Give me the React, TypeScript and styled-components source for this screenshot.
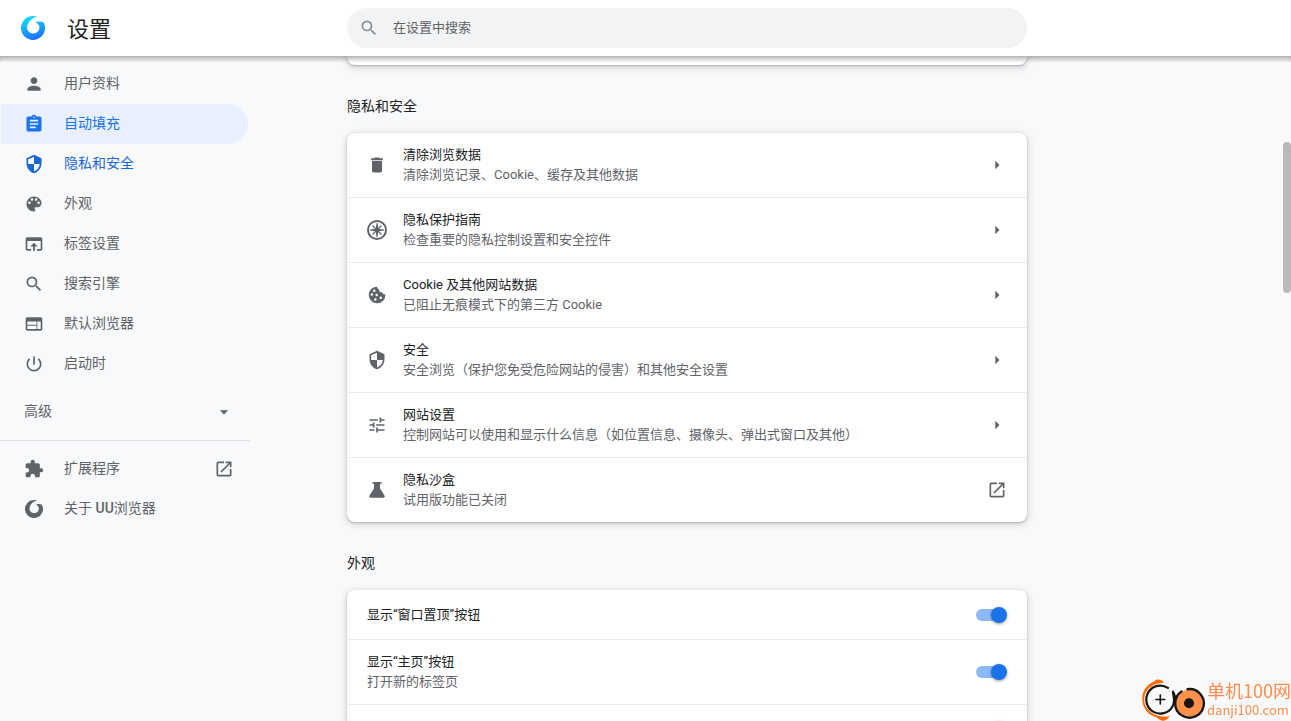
import React from 'react';
import styled, { createGlobalStyle } from 'styled-components';
import {
  MdArrowDropDown, MdArrowRight, MdAssignment, MdDelete, MdExtension,
  MdOpenInNew, MdPerson, MdPowerSettingsNew, MdSearch, MdSecurity, MdTune, MdWeb,
} from 'react-icons/md';

const GlobalStyle = createGlobalStyle`
  *, *::before, *::after { box-sizing: border-box; }
  body {
    margin: 0;
    background: #f8f9fb;
    color: #202124;
    font: 400 13px/20px Roboto, "Noto Sans CJK SC", sans-serif;
  }
  button, input { font: inherit; color: inherit; }
  h1, h2, p { margin: 0; font-weight: 400; }
  a { color: inherit; text-decoration: none; }
  svg { display: block; flex: none; }
`;

const Page = styled.div`
  display: flex;
  flex-direction: column;
  height: 100vh;
  overflow: hidden;
`;

const Header = styled.header`
  position: relative;
  z-index: 1;
  display: flex;
  flex: none;
  height: 56px;
  background: #fff;

  &::after {
    content: '';
    position: absolute;
    top: 100%;
    left: 0;
    right: 0;
    height: 6px;
    box-shadow: inset 0 5px 6px -3px rgba(0, 0, 0, 0.4);
  }
`;

const Body = styled.div`
  display: flex;
  flex: 1;
  min-height: 0;
`;

const StartColumn = styled.div`
  flex: 1 0 266px;
`;

const CenterColumn = styled.div`
  flex: 0 1 680px;
  min-width: 0;
`;

const EndColumn = styled.div`
  flex: 1 1 183px;
`;

const Brand = styled(StartColumn)`
  display: flex;
  align-items: center;
  gap: 22px;
  padding-left: 21px;
`;

const Title = styled.h1`
  padding-top: 4px;
  font-size: 22px;
  line-height: 32px;
`;

const SearchBox = styled.label`
  display: flex;
  align-items: center;
  gap: 14px;
  height: 40px;
  margin-top: 8px;
  padding: 0 12px;
  border-radius: 20px;
  background: #f1f3f4;
  color: #8b8e92;
`;

const SearchInput = styled.input`
  flex: 1;
  min-width: 0;
  padding: 0;
  border: 0;
  outline: 0;
  background: none;
  color: #202124;

  &::placeholder { color: #5f6368; opacity: 1; }
`;

const Menu = styled.nav`
  width: 250px;
  padding-top: 8px;
  color: #5f6368;
  font-size: 14px;
`;

const MenuItem = styled.a<{ $selected?: boolean; $active?: boolean }>`
  display: flex;
  align-items: center;
  gap: 20px;
  height: 40px;
  margin: 0 2px 0 1px;
  padding: 0 14px 0 23px;
  border-radius: 0 20px 20px 0;
  background: ${(p) => (p.$selected ? '#e8f0fe' : 'transparent')};
  color: ${(p) => (p.$selected ? '#1a73e8' : p.$active ? '#1967d2' : 'inherit')};
`;

const MenuLabel = styled.span`
  flex: 1;
  padding-bottom: 2px;
  text-align: left;
  b { font-weight: 500; }
`;

const Advanced = styled.button`
  display: flex;
  align-items: center;
  width: 100%;
  height: 40px;
  margin: 8px 0;
  padding: 0 16px 0 24px;
  border: 0;
  background: none;
`;

const Divider = styled.hr`
  height: 1px;
  margin: 0 0 8px;
  border: 0;
  background: #e0e2e5;
`;

const LogoSlot = styled.span`
  display: flex;
  justify-content: center;
  width: 20px;
`;

const Content = styled(CenterColumn)`
  & > :last-child { padding-bottom: 40px; }
`;

const Card = styled.div`
  border-radius: 8px;
  background: #fff;
  box-shadow: 0 1px 2px rgba(60, 64, 67, 0.3), 0 2px 6px 2px rgba(60, 64, 67, 0.15);
`;

const CardEnd = styled(Card)`
  height: 9px;
  border-radius: 0 0 8px 8px;
`;

const SectionTitle = styled.h2`
  padding: 31px 0 17px;
  font-size: 14px;
`;

const rowStyles = `
  display: flex;
  align-items: center;
  width: 100%;
  padding: 0 20px;
  border: 0;
  background: none;
  text-align: left;
`;

const LinkRow = styled.button`
  ${rowStyles}
  gap: 16px;
  height: 64px;
  color: #5f6368;

  & + & { height: 65px; border-top: 1px solid #ebebeb; }
`;

const ToggleRow = styled.label<{ $tall?: boolean }>`
  ${rowStyles}
  height: ${(p) => (p.$tall ? 65 : 49)}px;
  border-top: 1px solid #ebebeb;

  &:first-child { border-color: transparent; }
`;

const RowText = styled.span`
  display: flex;
  flex: 1;
  flex-direction: column;
  min-width: 0;
`;

const RowTitle = styled.span`
  color: #202124;
`;

const RowNote = styled.span`
  color: #5f6368;
`;

const Switch = styled.input`
  position: relative;
  flex: none;
  width: 31px;
  height: 16px;
  margin: 0;
  appearance: none;

  &::before, &::after { content: ''; position: absolute; }
  &::before {
    top: 2px;
    left: 0;
    width: 28px;
    height: 12px;
    border-radius: 6px;
    background: #bdc1c6;
  }
  &::after {
    top: 0;
    left: 0;
    width: 16px;
    height: 16px;
    border-radius: 50%;
    background: #fff;
    box-shadow: 0 1px 3px rgba(0, 0, 0, 0.4);
  }
  &:checked::before { background: #8cb8f5; }
  &:checked::after { left: 15px; background: #1a73e8; }
`;

const ScrollThumb = styled.div`
  position: fixed;
  z-index: 2;
  top: 142px;
  right: 0;
  width: 8px;
  height: 151px;
  border-radius: 4px;
  background: #b9b9b9;
`;

const Watermark = styled.div`
  position: fixed;
  z-index: 3;
  right: 0;
  bottom: 0;
  display: flex;
  gap: 1px;
  color: #ff8c4b;
  font-family: "Noto Sans CJK SC", sans-serif;
`;

const WatermarkText = styled.div`
  display: flex;
  flex-direction: column;
  padding-top: 1px;
  font-size: 13px;
  line-height: 20px;
  strong { font-size: 18px; font-weight: 400; }
`;

function UULogo({ size, colored }: { size: number; colored?: boolean }) {
  return (
    <svg width={size} height={size} viewBox="0 0 24 24" aria-hidden="true">
      <defs>
        <linearGradient id="uu-blue" x1="0.3" y1="0" x2="0.6" y2="1">
          <stop offset="0" stopColor="#10e0fb" />
          <stop offset="0.5" stopColor="#16a8ff" />
          <stop offset="1" stopColor="#1b6dff" />
        </linearGradient>
      </defs>
      <path
        fill={colored ? 'url(#uu-blue)' : 'currentColor'}
        d="M16 .7C14.8 .2 13.3 0 12 0A12 12 0 1 0 22.5 6.2Q19 4.9 14.5 6Q18.5 8 18.5 12A6.3 6.3 0 0 1 6 12C6 7.500 9.500 2.200 16 .7Z"
      />
    </svg>
  );
}

function PaletteIcon() {
  return (
    <svg width="20" height="20" viewBox="0 0 24 24" fill="currentColor" aria-hidden="true">
      <path d="M12 3c-4.970 0-9 4.030-9 9s4.030 9 9 9c.83 0 1.500-.67 1.500-1.500 0-.39-.15-.74-.39-1.010-.23-.26-.38-.61-.38-.99 0-.83.67-1.500 1.500-1.500H16c2.760 0 5-2.240 5-5 0-4.420-4.030-8-9-8zm-5.500 9c-.83 0-1.500-.67-1.500-1.500S5.670 9 6.500 9 8 9.670 8 10.500 7.330 12 6.500 12zm3-4C8.670 8 8 7.330 8 6.500S8.670 5 9.500 5s1.500.67 1.500 1.500S10.330 8 9.500 8zm5 0c-.83 0-1.500-.67-1.500-1.500S13.670 5 14.500 5s1.500.67 1.500 1.500S15.330 8 14.500 8zm3 4c-.83 0-1.500-.67-1.500-1.500S16.670 9 17.500 9s1.500.67 1.500 1.500-.67 1.500-1.500 1.500z" />
    </svg>
  );
}

function TabIcon() {
  return (
    <svg width="20" height="20" viewBox="0 0 24 24" fill="currentColor" aria-hidden="true">
      <path d="M20 4H4c-1.100 0-2 .9-2 2v12c0 1.100.9 2 2 2h4.500v-2H4V8.500h16V18h-4.500v2H20c1.100 0 2-.9 2-2V6c0-1.100-.9-2-2-2zm-8 6.500l-4.500 4.500h3.400v5h2.200v-5h3.400z" />
    </svg>
  );
}

function CompassIcon() {
  return (
    <svg width="20" height="20" viewBox="0 0 20 20" fill="none" stroke="currentColor" aria-hidden="true">
      <circle cx="10" cy="10" r="9" strokeWidth="2" />
      <path strokeWidth="1.200" d="M5.500 5.500l9 9M14.500 5.500l-9 9" />
      <path
        fill="currentColor"
        stroke="none"
        d="M9.500 3h1l.8 5.700L17 9.500v1l-5.700.8L10.500 17h-1l-.8-5.700L3 10.500v-1l5.700-.8z"
      />
    </svg>
  );
}

function CookieIcon() {
  return (
    <svg width="20" height="20" viewBox="0 0 20 20" aria-hidden="true">
      <path
        fill="currentColor"
        d="M10.200 1.700A8.300 8.300 0 1 0 18.300 9.300C16.800 9.500 15.500 8.800 15 7.300C13 7.600 11.800 6.300 12.200 4.700C10.800 4.300 10.200 3 10.200 1.700Z"
      />
      <g fill="#fff">
        <circle cx="7.300" cy="5.700" r="1.200" />
        <circle cx="4.800" cy="9.500" r="1.200" />
        <circle cx="9.700" cy="10" r="1.200" />
        <circle cx="8.300" cy="14.500" r="1.200" />
        <circle cx="13.800" cy="12.700" r="1.200" />
      </g>
    </svg>
  );
}

function FlaskIcon() {
  return (
    <svg width="20" height="20" viewBox="0 0 20 20" fill="currentColor" aria-hidden="true">
      <path d="M5.500 2h9v1.700h-1.500V8.500l4.500 7c.7 1.100 0 2.300-1.200 2.300H3.700c-1.200 0-1.900-1.200-1.200-2.300L7 8.500V3.700H5.500z" />
    </svg>
  );
}

function WatermarkLogo() {
  return (
    <svg width="64" height="42" viewBox="0 0 64 42" fill="none" strokeLinecap="round" aria-hidden="true">
      <path
        fill="#ff6b00"
        d="M22 3.500C20 .2 14.500-.8 12 2.600C4.500 5.500 0 12.500 .3 20.500C.5 29.500 6.500 36.500 15 38.500C18 42.500 24.500 43.500 27.500 37C17 39.500 2.300 33.500 2.200 20.500C2 12 8.500 4.500 22 3.500Z"
      />
      <path stroke="#1a1413" strokeWidth="2.200" d="M26 8.900A14 14 0 1 0 30.500 27.500C34 21 31 17 31 12.500" />
      <path stroke="#1a1413" strokeWidth="1.600" d="M18.300 16v9M13.800 20.500h9" />
      <circle cx="47.300" cy="24.300" r="13.500" fill="#ff914d" />
      <path stroke="#1a1413" strokeWidth="2.400" d="M39.500 12.500A14.300 14.300 0 1 0 45.500 10.200M31.500 14q1.500 4 2.500 6" />
      <circle cx="47" cy="24.300" r="5" fill="#1a1413" />
    </svg>
  );
}

const menuItems: { icon: React.ReactNode; label: string }[] = [
  { icon: <MdPerson size={20} />, label: '用户资料' },
  { icon: <MdAssignment size={20} />, label: '自动填充' },
  { icon: <MdSecurity size={20} />, label: '隐私和安全' },
  { icon: <PaletteIcon />, label: '外观' },
  { icon: <TabIcon />, label: '标签设置' },
  { icon: <MdSearch size={20} />, label: '搜索引擎' },
  { icon: <MdWeb size={20} />, label: '默认浏览器' },
  { icon: <MdPowerSettingsNew size={20} />, label: '启动时' },
];

const privacyRows: { icon: React.ReactNode; title: string; note: string; external?: boolean }[] = [
  { icon: <MdDelete size={20} />, title: '清除浏览数据', note: '清除浏览记录、Cookie、缓存及其他数据' },
  { icon: <CompassIcon />, title: '隐私保护指南', note: '检查重要的隐私控制设置和安全控件' },
  { icon: <CookieIcon />, title: 'Cookie 及其他网站数据', note: '已阻止无痕模式下的第三方 Cookie' },
  { icon: <MdSecurity size={20} />, title: '安全', note: '安全浏览（保护您免受危险网站的侵害）和其他安全设置' },
  { icon: <MdTune size={20} />, title: '网站设置', note: '控制网站可以使用和显示什么信息（如位置信息、摄像头、弹出式窗口及其他）' },
  { icon: <FlaskIcon />, title: '隐私沙盒', note: '试用版功能已关闭', external: true },
];

export default function App() {
  return (
    <Page>
      <GlobalStyle />
      <Header>
        <Brand>
          <UULogo size={24} colored />
          <Title>设置</Title>
        </Brand>
        <CenterColumn>
          <SearchBox>
            <MdSearch size={20} />
            <SearchInput type="text" placeholder="在设置中搜索" aria-label="在设置中搜索" />
          </SearchBox>
        </CenterColumn>
        <EndColumn />
      </Header>

      <Body>
        <StartColumn>
          <Menu>
            {menuItems.map(({ icon, label }, i) => (
              <MenuItem key={label} href="#" $selected={i === 1} $active={i === 2}>
                {icon}
                <MenuLabel>{label}</MenuLabel>
              </MenuItem>
            ))}
            <Advanced type="button">
              <MenuLabel>高级</MenuLabel>
              <MdArrowDropDown size={20} />
            </Advanced>
            <Divider />
            <MenuItem href="#">
              <MdExtension size={20} />
              <MenuLabel>扩展程序</MenuLabel>
              <MdOpenInNew size={20} />
            </MenuItem>
            <MenuItem href="#">
              <LogoSlot><UULogo size={18} /></LogoSlot>
              <MenuLabel>关于 <b>UU</b>浏览器</MenuLabel>
            </MenuItem>
          </Menu>
        </StartColumn>

        <Content as="main">
          <CardEnd />
          <section>
            <SectionTitle>隐私和安全</SectionTitle>
            <Card>
              {privacyRows.map((row) => (
                <LinkRow key={row.title} type="button">
                  {row.icon}
                  <RowText>
                    <RowTitle>{row.title}</RowTitle>
                    <RowNote>{row.note}</RowNote>
                  </RowText>
                  {row.external ? <MdOpenInNew size={20} /> : <MdArrowRight size={20} />}
                </LinkRow>
              ))}
            </Card>
          </section>
          <section>
            <SectionTitle>外观</SectionTitle>
            <Card>
              <ToggleRow>
                <RowText><RowTitle>显示“窗口置顶”按钮</RowTitle></RowText>
                <Switch type="checkbox" defaultChecked />
              </ToggleRow>
              <ToggleRow $tall>
                <RowText>
                  <RowTitle>显示“主页”按钮</RowTitle>
                  <RowNote>打开新的标签页</RowNote>
                </RowText>
                <Switch type="checkbox" defaultChecked />
              </ToggleRow>
              <ToggleRow>
                <RowText />
                <Switch type="checkbox" aria-label="显示书签栏" defaultChecked />
              </ToggleRow>
            </Card>
          </section>
        </Content>
        <EndColumn />
      </Body>

      <ScrollThumb />
      <Watermark>
        <WatermarkLogo />
        <WatermarkText>
          <strong>单机100网</strong>
          <span>danji100.com</span>
        </WatermarkText>
      </Watermark>
    </Page>
  );
}
